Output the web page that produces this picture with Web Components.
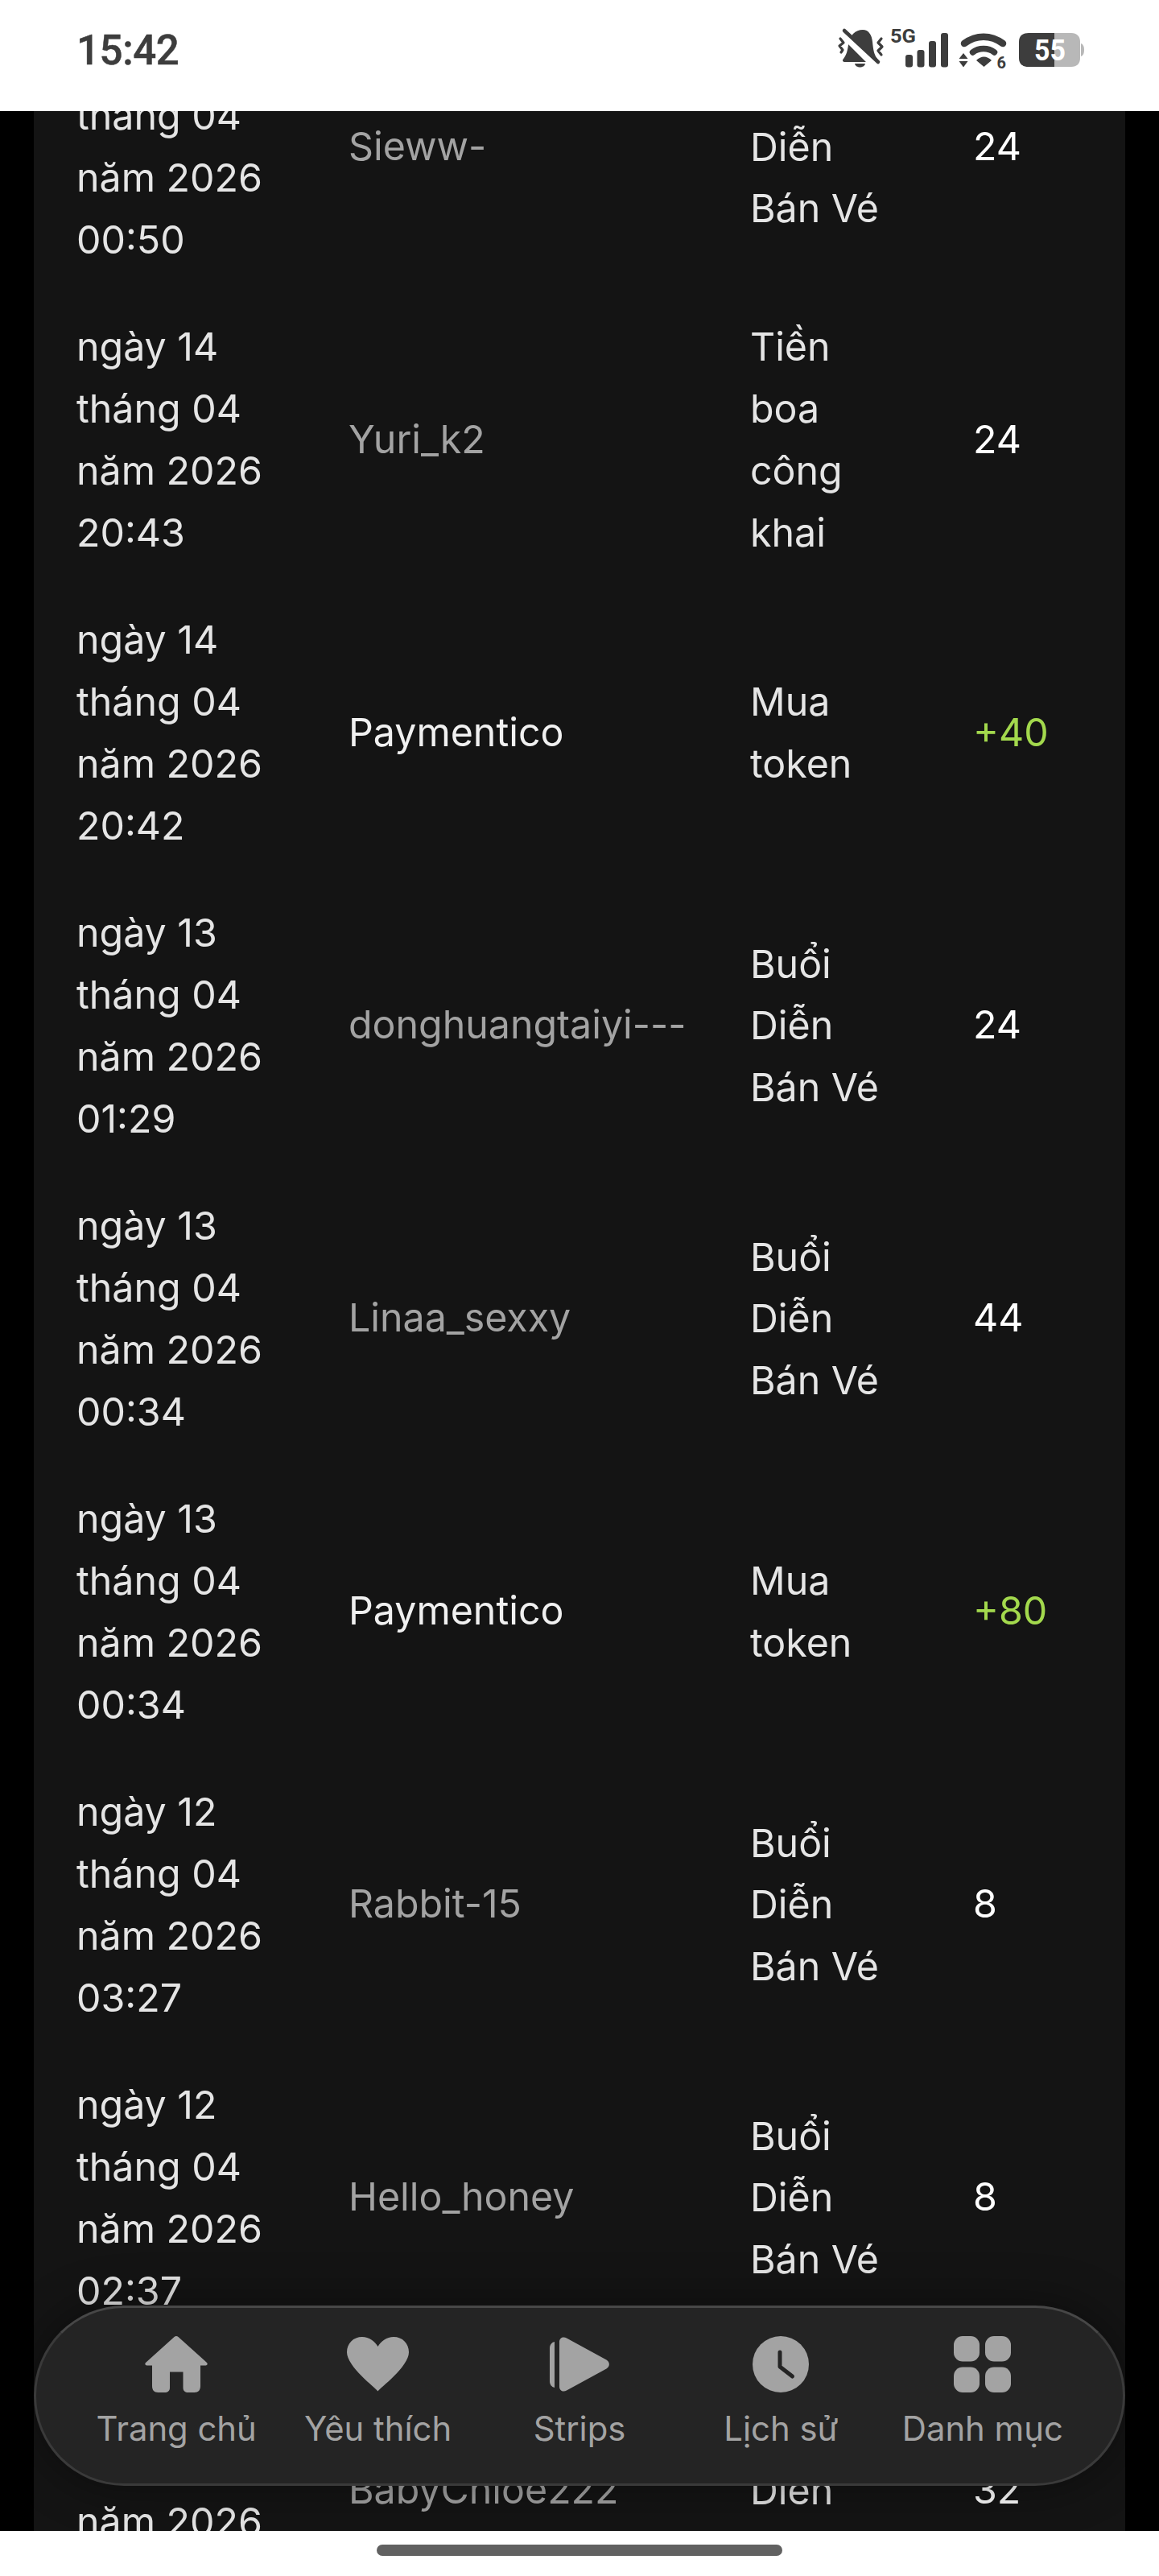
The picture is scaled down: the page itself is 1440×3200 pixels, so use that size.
<!doctype html>
<html><head><meta charset="utf-8">
<style>html,body{margin:0;padding:0;background:#000}</style>
</head><body>
<phone-screen>
  <status-bar slot="top"></status-bar>
  <tx-row><span slot="date" style="display:block;padding-top:76.8px">tháng 04 năm 2026 00:50</span><span slot="name">Sieww-</span><span slot="type" style="display:block;padding-top:76.8px">Diễn Bán Vé</span><span slot="amt">24</span></tx-row>
  <tx-row><span slot="date">ngày 14 tháng 04 năm 2026 20:43</span><span slot="name">Yuri_k2</span><span slot="type">Tiền boa công khai</span><span slot="amt">24</span></tx-row>
  <tx-row sys credit><span slot="date">ngày 14 tháng 04 năm 2026 20:42</span><span slot="name">Paymentico</span><span slot="type">Mua token</span><span slot="amt">+40</span></tx-row>
  <tx-row><span slot="date">ngày 13 tháng 04 năm 2026 01:29</span><span slot="name">donghuangtaiyi---</span><span slot="type">Buổi Diễn Bán Vé</span><span slot="amt">24</span></tx-row>
  <tx-row><span slot="date">ngày 13 tháng 04 năm 2026 00:34</span><span slot="name">Linaa_sexxy</span><span slot="type">Buổi Diễn Bán Vé</span><span slot="amt">44</span></tx-row>
  <tx-row sys credit><span slot="date">ngày 13 tháng 04 năm 2026 00:34</span><span slot="name">Paymentico</span><span slot="type">Mua token</span><span slot="amt">+80</span></tx-row>
  <tx-row><span slot="date">ngày 12 tháng 04 năm 2026 03:27</span><span slot="name">Rabbit-15</span><span slot="type">Buổi Diễn Bán Vé</span><span slot="amt">8</span></tx-row>
  <tx-row><span slot="date">ngày 12 tháng 04 năm 2026 02:37</span><span slot="name">Hello_honey</span><span slot="type">Buổi Diễn Bán Vé</span><span slot="amt">8</span></tx-row>
  <tx-row><span slot="date" style="display:block;padding-top:153.6px">năm 2026</span><span slot="name">BabyChloe222</span><span slot="type">Diễn</span><span slot="amt">32</span></tx-row>
  <bottom-nav slot="nav"></bottom-nav>
</phone-screen>
<script>
const tpl = (html) => { const t = document.createElement('template'); t.innerHTML = html; return t; };
const def = (name, t, init) => customElements.define(name, class extends HTMLElement {
  constructor(){ super(); this.attachShadow({mode:'open'}).appendChild(t.content.cloneNode(true)); }
  connectedCallback(){ if(init) init(this); }
});

def('phone-screen', tpl(`<style>
:host{display:flex;flex-direction:column;width:1440px;height:3200px;overflow:hidden;background:#fff;font-family:Inter,"Liberation Sans",sans-serif}
.view{flex:1;min-height:0;position:relative;overflow:hidden;background:#000;padding:0 42px}
.panel{background:#141414;height:100%;overflow:hidden}
.list{margin-top:-137px}
.home{height:56px;flex:none;background:#fff;display:flex;justify-content:center;padding-top:17px;box-sizing:border-box}
.pill{width:504px;height:14px;border-radius:7px;background:#616161}
</style>
<slot name="top"></slot>
<div class="view"><div class="panel"><div class="list"><slot></slot></div></div><slot name="nav"></slot></div>
<div class="home"><div class="pill"></div></div>`));

def('status-bar', tpl(`<style>
:host{display:flex;flex:none;height:138px;background:#fff;align-items:center;justify-content:space-between;padding:0 90px 0 95px;box-sizing:border-box;color:#3d3d3d}
.t{font:500 51px/1 Roboto,sans-serif;margin-top:-13px;letter-spacing:-.4px;-webkit-text-stroke:.5px #3d3d3d}
svg{display:block;margin-top:-18px}
</style>
<span class="t">15:42</span>
<svg width="320" height="60" viewBox="1030 30 320 60" fill="#3d3d3d">
  <path d="M1072 37 C1079 37 1083 43 1084 52 C1085 62 1086 68 1090 73 C1092 76 1090 77 1088 77 H1050 C1047 77 1046 75 1048 73 C1052 68 1053 62 1054 56 C1055 44 1063 37 1072 37 Z"/>
  <path d="M1062 79 H1075 C1074 85 1063 85 1062 79 Z"/>
  <path d="M1044 38 L1086 80" stroke="#fff" stroke-width="10" fill="none"/>
  <path d="M1049 38 L1091 77" stroke="#3d3d3d" stroke-width="4.500" stroke-linecap="round" fill="none"/>
  <path d="M1044 48 L1048 53 L1043 57 L1047 62 L1045 65 M1095 48 L1091 53 L1096 58 L1091 63 L1095 68" fill="none" stroke="#3d3d3d" stroke-width="3.200" stroke-linecap="round" stroke-linejoin="round"/>
  <text x="1106" y="53" font-family="Roboto,sans-serif" font-weight="700" font-size="23" textLength="32" lengthAdjust="spacingAndGlyphs">5G</text>
  <rect x="1125" y="68" width="9" height="15.500" rx="3"/><rect x="1139.500" y="62" width="9" height="21.500" rx="3"/>
  <rect x="1154" y="51" width="9" height="32.500" rx="3"/><rect x="1169" y="41" width="9" height="42.500" rx="3"/>
  <path d="M1198 54 C1213 43 1231 43 1246 54" fill="none" stroke="#3d3d3d" stroke-width="8.500" stroke-linecap="round"/>
  <path d="M1208.500 65 C1216 59 1228 59 1235.500 65" fill="none" stroke="#3d3d3d" stroke-width="7.500" stroke-linecap="round"/>
  <path d="M1213 75 C1219 69 1226 69 1232 75 L1222.500 83 Z"/>
  <path d="M1197 66 L1202.500 73 H1191.500 Z M1191.500 76 H1202.500 L1197 83.500 Z"/>
  <text x="1238.500" y="85" font-family="Roboto,sans-serif" font-weight="700" font-size="20">6</text>
  <path d="M1278 41 H1310 V83 H1278 C1270 83 1266 79 1266 72 V52 C1266 45 1270 41 1278 41 Z"/>
  <path d="M1310 41 H1331 C1338 41 1342 45 1342 52 V72 C1342 79 1338 83 1331 83 H1310 Z" fill="#b8b8b8"/>
  <path d="M1343 54 C1346 55 1347 58 1347 62 C1347 66 1346 69 1343 70 Z" fill="#b8b8b8"/>
  <text x="1285" y="75" font-family="Roboto,sans-serif" font-weight="700" font-size="37" fill="#fff" textLength="39" lengthAdjust="spacingAndGlyphs">55</text>
</svg>`));

def('tx-row', tpl(`<style>
:host{display:grid;grid-template-columns:338px 499px 277px 1fr;padding:28.4px 0 28.4px 53px;min-height:307.2px;align-items:center;font:400 48.3px/76.8px Inter,"Liberation Sans",sans-serif;color:#e5e5e5}
.date{align-self:start;max-width:270px}
.name{color:#a3a3a3;white-space:nowrap;padding-bottom:2px}
:host([sys]) .name{color:#f0f0f0}
.type{max-width:178px}
.amt{color:#fff;padding-bottom:2px}
:host([credit]) .amt{color:#a3d94d}
</style>
<div class="date"><slot name="date"></slot></div>
<div class="name"><slot name="name"></slot></div>
<div class="type"><slot name="type"></slot></div>
<div class="amt"><slot name="amt"></slot></div>`));

def('nav-item', tpl(`<style>
:host{display:flex;flex-direction:column;align-items:center;color:#a3a3a3;font:400 41.800px/60px Inter,"Liberation Sans",sans-serif;white-space:nowrap}
.ic{height:72px;display:flex;align-items:center;justify-content:center;margin-bottom:14px}
::slotted(svg){display:block}
</style><div class="ic"><slot name="ic"></slot></div><slot></slot>`));

def('bottom-nav', tpl(`<style>
:host{position:absolute;left:42px;right:42px;top:2726px;height:224px;box-sizing:border-box;border-radius:112px;background:#242424;border:3px solid #3a3a3a;border-top-color:#474747;box-shadow:0 0 60px rgba(0,0,0,.4);display:grid;grid-template-columns:repeat(5,1fr);padding:34px 49px 0;align-items:start}
</style><slot></slot>`), el => {
  if (el.childElementCount) return;
  el.innerHTML = `
  <nav-item><svg slot="ic" width="78" height="70" viewBox="0 0 78 70" fill="#a3a3a3"><path d="M36.500 1 C38 -.3 40 -.3 41.500 1 L77 33 C78.400 34.400 77.600 36.500 75.500 36.500 L69 36.500 V62 C69 67 66.500 70 61.500 70 H54 C50 70 47.500 68 47.500 64 V44.500 H31 V64 C31 68 28.500 70 24.500 70 H16.500 C11.500 70 9 67 9 62 V36.500 H2.500 C.4 36.500 -.4 34.400 1 33 Z"/></svg>Trang chủ</nav-item>
  <nav-item><svg slot="ic" width="77" height="68" viewBox="0 0 77 68" fill="#a3a3a3"><path d="M38.500 67.500 C36 63.500 0 37 0 19 C0 8 8 0 19 0 C27.500 0 34.500 5 38.500 12 C42.500 5 49.500 0 58 0 C69 0 77 8 77 19 C77 37 41 63.500 38.500 67.500 Z"/></svg>Yêu thích</nav-item>
  <nav-item><svg slot="ic" width="74" height="68" viewBox="0 0 74 68" fill="#a3a3a3"><path d="M6 6 V63 C2 62 0 59 0 55 V14 C0 10 2 7 6 6 Z"/><path d="M12 6 C12 1 17 -1 21 1.500 L70.500 28.500 C75 31.500 75 36.500 70.500 39.500 L21 66.500 C17 69 12 67 12 62 Z"/></svg>Strips</nav-item>
  <nav-item><svg slot="ic" width="70" height="70" viewBox="0 0 70 70"><circle cx="35" cy="35" r="35" fill="#a3a3a3"/><path d="M34 20 V38 L49.500 50" fill="none" stroke="#242424" stroke-width="5" stroke-linecap="round" stroke-linejoin="round"/></svg>Lịch sử</nav-item>
  <nav-item><svg slot="ic" width="71" height="70" viewBox="0 0 71 70" fill="#a3a3a3"><rect width="32" height="31.500" rx="11"/><rect x="39" width="32" height="31.500" rx="11"/><rect y="38.500" width="32" height="31.500" rx="11"/><rect x="39" y="38.500" width="32" height="31.500" rx="11"/></svg>Danh mục</nav-item>`;
});
</script>
</body></html>
